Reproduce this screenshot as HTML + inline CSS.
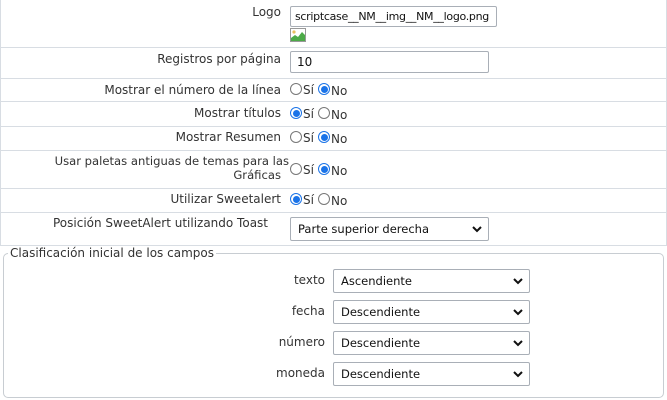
<!DOCTYPE html>
<html><head><meta charset="utf-8"><style>
*{margin:0;padding:0;box-sizing:border-box}
body{width:667px;height:400px;background:#fff;font-family:"DejaVu Sans","Liberation Sans",sans-serif;font-size:12px;color:#333;position:relative;overflow:hidden}
.a{position:absolute;white-space:nowrap}
.l{position:absolute;right:386px;text-align:right;white-space:nowrap}
.h{position:absolute;left:0;width:667px;height:1px;background:#d8dde3}
.in{position:absolute;border:1px solid #a9afb7;border-radius:2px;background:#fff;padding:0 6px;font-size:12px;color:#111;display:flex;align-items:center;overflow:hidden;white-space:nowrap}
.sel{position:absolute;border:1px solid #a9afb7;border-radius:2px;background:#fff;padding:0 7px;font-size:11.5px;color:#111;display:flex;align-items:center}
.sel svg{position:absolute;right:6px;top:50%;margin-top:-4px}
.r{position:absolute;width:12px;height:12px;border-radius:50%;border:1px solid #777;background:#fff}
.r.on{border:1px solid #1a73e8;background:#fff}
.r.on::after{content:"";position:absolute;left:1.5px;top:1.5px;width:7px;height:7px;border-radius:50%;background:#1a73e8}
.rt{position:absolute;font-size:12px}
</style></head><body>
<div style="position:absolute;left:0;top:0;width:1px;height:245px;background:#d8dde3"></div>
<div style="position:absolute;right:0;top:0;width:1px;height:245px;background:#d8dde3"></div>
<div class="l" style="top:5px">Logo</div>
<div class="in" style="left:290px;top:6px;width:207px;height:21px;font-size:11px;letter-spacing:-0.3px;padding:0 4px">scriptcase__NM__img__NM__logo.png</div>
<svg class="a" style="left:290px;top:28px" width="16" height="14" viewBox="0 0 16 14"><rect x="0.5" y="0.5" width="15" height="13" fill="#fff" stroke="#999"/><circle cx="4" cy="4" r="1.6" fill="#e8c060"/><path d="M1 13 L1 10 L5 7 L8 9 L12 4 L15 7 L15 13Z" fill="#4caa48"/></svg>
<div class="h" style="top:47px"></div>
<div class="l" style="top:52px">Registros por página</div>
<div class="in" style="left:290px;top:51px;width:199px;height:22px">10</div>
<div class="h" style="top:78px"></div>
<div class="l" style="top:83px">Mostrar el número de la línea</div>
<div class="h" style="top:101px"></div>
<div class="l" style="top:106px">Mostrar títulos</div>
<div class="h" style="top:126px"></div>
<div class="l" style="top:130px">Mostrar Resumen</div>
<div class="h" style="top:150px"></div>
<div class="l" style="top:154px;line-height:14px;right:378px;font-size:11.6px">Usar paletas antiguas de temas para las<br><span style="margin-right:8px">Gráficas</span></div>
<div class="h" style="top:188px"></div>
<div class="l" style="top:192px">Utilizar Sweetalert</div>
<div class="h" style="top:212px"></div>
<div class="a" style="left:53px;top:216px">Posición SweetAlert utilizando Toast</div>
<div class="sel" style="left:290px;top:217px;width:199px;height:24px">Parte superior derecha<svg width="10" height="8" viewBox="0 0 10 8"><path d="M1 2 L5 6 L9 2" fill="none" stroke="#111" stroke-width="2"/></svg></div>
<div class="h" style="top:245px"></div>

<div class="r" style="left:290px;top:83px"></div><div class="rt" style="left:303px;top:83px">Sí</div><div class="r on" style="left:318px;top:83px"></div><div class="rt" style="left:331px;top:84px">No</div>
<div class="r on" style="left:290px;top:107px"></div><div class="rt" style="left:303px;top:107px">Sí</div><div class="r" style="left:318px;top:107px"></div><div class="rt" style="left:331px;top:108px">No</div>
<div class="r" style="left:290px;top:131px"></div><div class="rt" style="left:303px;top:131px">Sí</div><div class="r on" style="left:318px;top:131px"></div><div class="rt" style="left:331px;top:132px">No</div>
<div class="r" style="left:290px;top:163px"></div><div class="rt" style="left:303px;top:163px">Sí</div><div class="r on" style="left:318px;top:163px"></div><div class="rt" style="left:331px;top:164px">No</div>
<div class="r on" style="left:290px;top:193px"></div><div class="rt" style="left:303px;top:193px">Sí</div><div class="r" style="left:318px;top:193px"></div><div class="rt" style="left:331px;top:194px">No</div>

<div style="position:absolute;left:3px;top:253px;width:661px;height:145px;border:1px solid #c8cdd2;border-radius:5px"></div>
<div class="a" style="left:8px;top:246px;background:#fff;padding:0 2px">Clasificación inicial de los campos</div>
<div class="l" style="right:342px;top:273px">texto</div>
<div class="sel" style="left:333px;top:269px;width:197px;height:24px">Ascendiente<svg width="10" height="8" viewBox="0 0 10 8"><path d="M1 2 L5 6 L9 2" fill="none" stroke="#111" stroke-width="2"/></svg></div>
<div class="l" style="right:342px;top:304px">fecha</div>
<div class="sel" style="left:333px;top:300px;width:197px;height:24px">Descendiente<svg width="10" height="8" viewBox="0 0 10 8"><path d="M1 2 L5 6 L9 2" fill="none" stroke="#111" stroke-width="2"/></svg></div>
<div class="l" style="right:342px;top:335px">número</div>
<div class="sel" style="left:333px;top:331px;width:197px;height:24px">Descendiente<svg width="10" height="8" viewBox="0 0 10 8"><path d="M1 2 L5 6 L9 2" fill="none" stroke="#111" stroke-width="2"/></svg></div>
<div class="l" style="right:342px;top:366px">moneda</div>
<div class="sel" style="left:333px;top:362px;width:197px;height:24px">Descendiente<svg width="10" height="8" viewBox="0 0 10 8"><path d="M1 2 L5 6 L9 2" fill="none" stroke="#111" stroke-width="2"/></svg></div>
</body></html>
